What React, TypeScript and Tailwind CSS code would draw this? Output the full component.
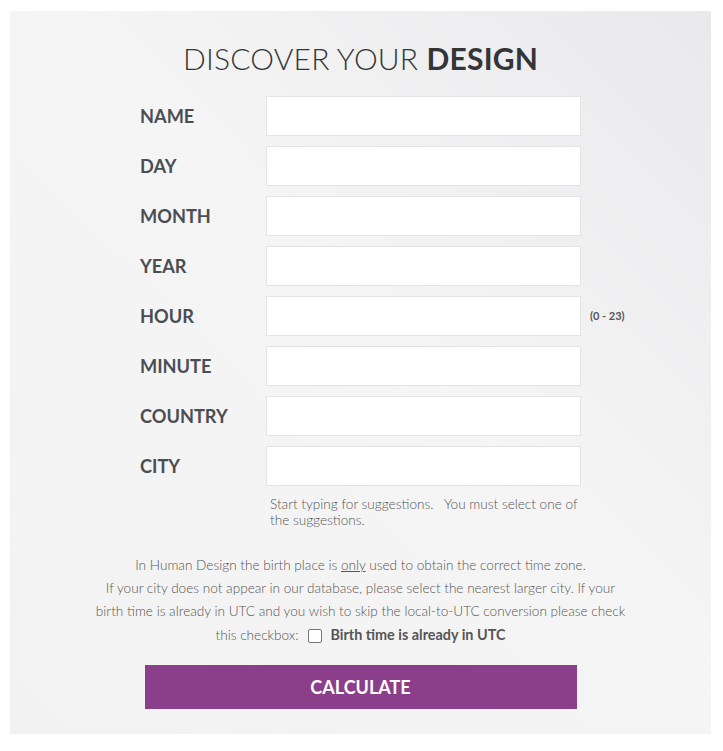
const fields = ['NAME', 'DAY', 'MONTH', 'YEAR', 'HOUR', 'MINUTE', 'COUNTRY', 'CITY'];

export default function App() {
  return (
    <div className="min-h-[751px] bg-white pt-[11px] pl-[10px] font-['Lato','Liberation_Sans',sans-serif]">
      <div className="w-[701px] h-[723px] bg-[linear-gradient(225deg,#e9e8eb_0%,#f5f5f5_45%,#f2f2f2_100%)] pt-[29px]">
        <h1 className="text-center text-[30px] leading-[36px] text-[#333538] tracking-[0.2px]">
          <span className="font-light">DISCOVER YOUR </span>
          <span className="font-bold">DESIGN</span>
        </h1>

        <form className="mt-[20px] pl-[130px]" onSubmit={(e) => e.preventDefault()}>
          {fields.map((f) => (
            <div key={f} className="flex items-center h-[40px] mb-[10px]">
              <label className="w-[126px] pt-[1px] text-[18.2px] font-bold text-[#4a4e54]">{f}</label>
              <input
                type="text"
                className="w-[315px] h-[40px] bg-white border border-[#e4e4e4] outline-none px-2 text-[14px]"
              />
              {f === 'HOUR' && (
                <span className="ml-[9px] text-[11px] font-bold text-[#555]">(0 - 23)</span>
              )}
            </div>
          ))}
          <p className="ml-[130px] w-[315px] text-[13.6px] leading-[16px] font-light text-[#555]">
            Start typing for suggestions.&nbsp;&nbsp; You must select one of the suggestions.
          </p>
        </form>

        {/* line breaks fixed to match the original wrapping */}
        <p className="mx-auto mt-[26px] w-[580px] text-center text-[13.6px] leading-[23px] font-light text-[#555]">
          In Human Design the birth place is <u>only</u> used to obtain the correct time zone.
          <br />
          If your city does not appear in our database, please select the nearest larger city. If your
          <br />
          birth time is already in UTC and you wish to skip the local-to-UTC conversion please check
          <br />
          this checkbox:
          <input
            type="checkbox"
            className="inline-block ml-[10px] mr-[8px] -mt-[2px] w-[14px] h-[14px] align-middle appearance-none border border-[#777] rounded-[2px] bg-white"
          />
          <span className="text-[14.4px] font-bold text-[#555]">Birth time is already in UTC</span>
        </p>

        <button
          type="button"
          className="block mx-auto mt-[18px] w-[432px] h-[44px] bg-[#8b3e89] text-white text-[18px] font-bold"
        >
          CALCULATE
        </button>
      </div>
    </div>
  );
}
